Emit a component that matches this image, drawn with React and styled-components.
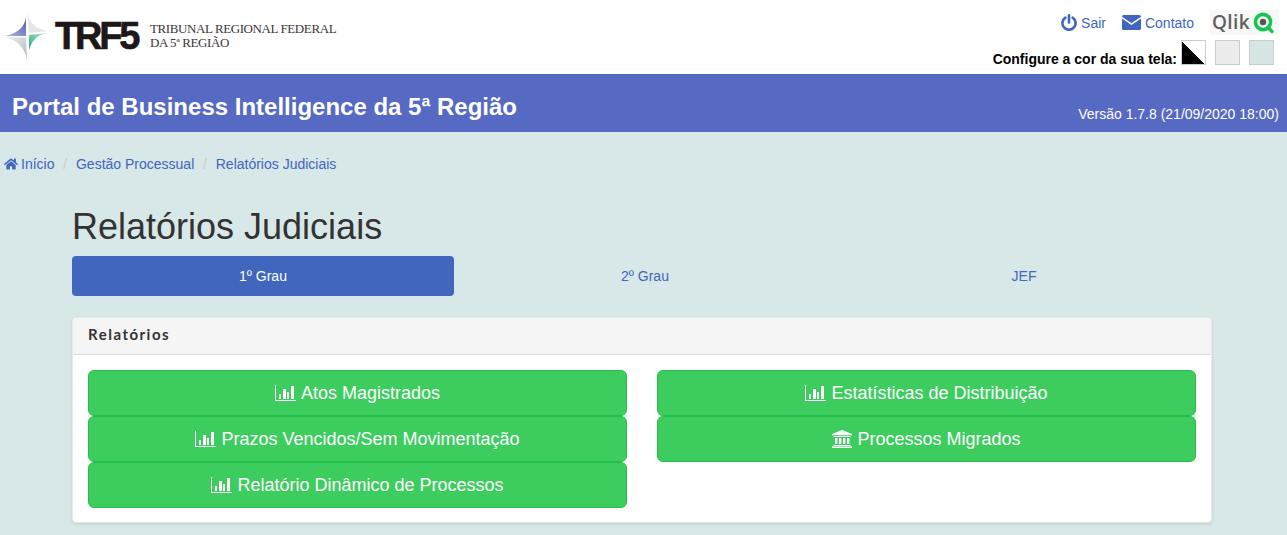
import React from "react";
import styled, { createGlobalStyle } from "styled-components";
import { FaHome } from "react-icons/fa";

const GlobalStyle = createGlobalStyle`
  html, body {
    margin: 0;
    height: 100%;
    overflow: hidden;
    background: #d8e7e7;
    font-family: "Liberation Sans", Arial, sans-serif;
    font-size: 14px;
    color: #333;
  }
  * { box-sizing: border-box; }
`;

const Header = styled.header`
  height: 74px;
  background: #fff;
  display: flex;
  justify-content: space-between;
`;
const Logo = styled.div`
  display: flex;
  align-items: flex-start;
  padding: 10px 0 0 5px;
`;
const LogoMark = styled.svg`
  width: 44px;
  height: 50px;
  flex: none;
`;
const LogoName = styled.div`
  font-weight: 700;
  font-size: 38px;
  line-height: 32px;
  letter-spacing: -3.2px;
  color: #1d1718;
  margin: 10px 0 0 6px;
  width: 84px;
  -webkit-text-stroke: 0.6px #1d1718;
`;
const LogoText = styled.div`
  font-family: "Liberation Serif", "Times New Roman", serif;
  font-size: 13px;
  line-height: 14px;
  letter-spacing: -0.4px;
  color: #3c3636;
  margin: 12px 0 0 11px;
  white-space: nowrap;
`;
const Tools = styled.div`
  display: flex;
  flex-direction: column;
  align-items: flex-end;
  padding: 10px 13px 0 0;
`;
const ToolLinks = styled.div`
  display: flex;
  align-items: center;
  height: 25px;
  margin-right: -5px;
`;
const ToolLink = styled.a`
  display: flex;
  align-items: center;
  gap: ${(p) => p.$gap}px;
  color: #4166bd;
  margin-right: ${(p) => p.$after}px;
`;
const QlikBox = styled.div`
  width: 69px;
  height: 25px;
  background: #f8f8f8;
  display: flex;
  align-items: center;
  padding-left: 2px;
  gap: 3px;
`;
const QlikWord = styled.span`
  font-family: "Open Sans", sans-serif;
  font-weight: 600;
  font-size: 19px;
  line-height: 25px;
  color: #5f5f5f;
  letter-spacing: 0.4px;
`;
const ColorRow = styled.div`
  display: flex;
  align-items: flex-start;
  margin-top: 5px;
`;
const ColorLabel = styled.span`
  font-weight: 700;
  color: #000;
  line-height: 16px;
  margin: 11px 4px 0 0;
`;
const Swatch = styled.div`
  width: 25px;
  height: 25px;
  border: 1px solid #ccc;
  margin-left: ${(p) => p.$left}px;
  background: ${(p) => p.$bg};
`;
const Banner = styled.div`
  height: 58px;
  background: #5669c3;
  color: #fff;
  display: flex;
  justify-content: space-between;
  border-top: 1px solid #4166bd;
`;
const BannerTitle = styled.h1`
  margin: 0;
  padding: 18px 0 0 12px;
  font-size: 24px;
  line-height: 28px;
  font-weight: 700;
`;
const Version = styled.div`
  padding: 29px 8px 0 0;
  line-height: 20px;
`;
const Crumbs = styled.nav`
  display: flex;
  align-items: center;
  height: 20px;
  margin-top: 22px;
  padding-left: 4px;
  color: #4166bd;
`;
const Crumb = styled.a`
  display: flex;
  align-items: center;
  gap: 3px;
  color: #4166bd;
`;
const Sep = styled.span`
  color: #ccc;
  padding: 0 8.8px;
`;
const Main = styled.main`
  width: 1140px;
  margin-left: 72px;
`;
const PageTitle = styled.h2`
  margin: 0;
  padding-top: 33px;
  font-size: 36px;
  line-height: 40px;
  font-weight: 400;
  color: #333;
`;
const Tabs = styled.div`
  display: grid;
  grid-template-columns: 382px 382px 376px;
  margin-top: 9px;
`;
const Tab = styled.a`
  height: 40px;
  display: flex;
  align-items: center;
  justify-content: center;
  border-radius: 4px;
  color: ${(p) => (p.$active ? "#fff" : "#4166bd")};
  background: ${(p) => (p.$active ? "#4166bd" : "transparent")};
`;
const Panel = styled.section`
  margin-top: 21px;
  height: 206px;
  background: #fff;
  border-radius: 4px;
  border: 1px solid #e4e9e9;
  box-shadow: 0 1px 3px rgba(0, 0, 0, 0.12);
  overflow: hidden;
`;
const PanelHeading = styled.div`
  height: 37px;
  padding: 0 15px 5px;
  display: flex;
  align-items: center;
  background: #f5f5f5;
  border-bottom: 1px solid #ddd;
  font-family: Lato, sans-serif;
  font-size: 15px;
  font-weight: 700;
  letter-spacing: 1.5px;
  color: #333;
`;
const PanelBody = styled.div`
  display: grid;
  grid-template-columns: 539px 539px;
  column-gap: 30px;
  padding: 15px 15px 0;
`;
const Column = styled.div`
  display: flex;
  flex-direction: column;
`;
const ReportButton = styled.a`
  height: 46px;
  display: flex;
  align-items: center;
  justify-content: center;
  gap: 5px;
  background: #3ccd5e;
  border: 1px solid #23bf4a;
  border-radius: 6px;
  color: #fff;
  font-size: 18px;
`;

const BarIcon = () => (
  <svg width="21" height="16" viewBox="0 0 21 16" fill="#fff">
    <path d="M0 0h1v15h20v1H0z" />
    <path d="M4 9h2v5H4zM8 4h3v10H8zM12 7h2v7h-2zM16 1h3v13h-3z" />
  </svg>
);

const BankIcon = () => (
  <svg width="20" height="18" viewBox="0 0 20 18" fill="#fff">
    <path d="M10 0l10 4v1.2H0V4z" />
    <path d="M1.5 6h17v1h-17zM3 8h2.4v6H3zM7 8h2.4v6H7zM11 8h2.4v6H11zM15 8h2.4v6H15zM1.5 15h17v1h-17zM0 16.6h20V18H0z" />
  </svg>
);

const PowerIcon = () => (
  <svg width="16" height="17" viewBox="0 0 16 17" fill="none" stroke="#4166bd" strokeWidth="2.6" strokeLinecap="round">
    <path d="M8 1.4v7" />
    <path d="M4.4 3.6a6.6 6.6 0 1 0 7.2 0" />
  </svg>
);

const MailIcon = () => (
  <svg width="19" height="15" viewBox="0 0 19 15">
    <rect width="19" height="15" rx="1.6" fill="#4166bd" />
    <path d="M0 2.6l9.5 6.6 9.5-6.6" fill="none" stroke="#fff" strokeWidth="1.5" />
  </svg>
);

const QlikMark = () => (
  <svg width="21" height="22" viewBox="0 0 21 22" fill="none">
    <circle cx="10" cy="10" r="7.6" stroke="#16c653" strokeWidth="3.6" />
    <circle cx="10" cy="10" r="3.2" fill="#555" />
    <path d="M15 15.5l4 4" stroke="#16c653" strokeWidth="3.4" strokeLinecap="round" />
  </svg>
);

const TrfMark = () => (
  <LogoMark viewBox="0 0 44 50">
    <defs>
      <linearGradient id="markBlue" x1="1" y1="0" x2="0" y2="1">
        <stop offset="0" stopColor="#4d58b4" />
        <stop offset="1" stopColor="#b4b9de" />
      </linearGradient>
      <linearGradient id="markGreen" x1="0" y1="1" x2="1" y2="0">
        <stop offset="0" stopColor="#1fae76" />
        <stop offset="1" stopColor="#bfe8d8" />
      </linearGradient>
      <linearGradient id="markGrey" x1="0" y1="0" x2="1" y2="1">
        <stop offset="0" stopColor="#f0f0f1" />
        <stop offset="1" stopColor="#b5b7bb" />
      </linearGradient>
    </defs>
    <path d="M22 0 C23 12 30 19 43 21 L24 23 Z" fill="#e6e6e8" />
    <path d="M21 7 C20 16 14 23 0 26 L21 26 Z" fill="url(#markBlue)" />
    <path d="M0 27 L21 27.5 L22 50 C20 38 13 31 0 27 Z" fill="url(#markGrey)" />
    <path d="M24 25 L43 23 C33 25 28 28 24 40 Z" fill="url(#markGreen)" />
  </LogoMark>
);

const App = () => {
  return (
    <>
      <GlobalStyle />
      <Header>
        <Logo>
          <TrfMark />
          <LogoName>TRF5</LogoName>
          <LogoText>
            TRIBUNAL REGIONAL FEDERAL
            <br />
            DA 5ª REGIÃO
          </LogoText>
        </Logo>
        <Tools>
          <ToolLinks>
            <ToolLink $gap={4} $after={16}>
              <PowerIcon />
              Sair
            </ToolLink>
            <ToolLink $gap={4} $after={16}>
              <MailIcon />
              Contato
            </ToolLink>
            <QlikBox>
              <QlikWord>Qlik</QlikWord>
              <QlikMark />
            </QlikBox>
          </ToolLinks>
          <ColorRow>
            <ColorLabel>Configure a cor da sua tela:</ColorLabel>
            <Swatch $left={0} $bg="linear-gradient(to top right, #000 50%, #fff 50%)" />
            <Swatch $left={9} $bg="#ececec" />
            <Swatch $left={9} $bg="#d6e6e6" />
          </ColorRow>
        </Tools>
      </Header>
      <Banner>
        <BannerTitle>Portal de Business Intelligence da 5ª Região</BannerTitle>
        <Version>Versão 1.7.8 (21/09/2020 18:00)</Version>
      </Banner>
      <Crumbs>
        <Crumb>
          <FaHome size={14} />
          Início
        </Crumb>
        <Sep>/</Sep>
        <Crumb>Gestão Processual</Crumb>
        <Sep>/</Sep>
        <Crumb>Relatórios Judiciais</Crumb>
      </Crumbs>
      <Main>
        <PageTitle>Relatórios Judiciais</PageTitle>
        <Tabs>
          <Tab $active>1º Grau</Tab>
          <Tab>2º Grau</Tab>
          <Tab>JEF</Tab>
        </Tabs>
        <Panel>
          <PanelHeading>Relatórios</PanelHeading>
          <PanelBody>
            <Column>
              <ReportButton>
                <BarIcon />
                Atos Magistrados
              </ReportButton>
              <ReportButton>
                <BarIcon />
                Prazos Vencidos/Sem Movimentação
              </ReportButton>
              <ReportButton>
                <BarIcon />
                Relatório Dinâmico de Processos
              </ReportButton>
            </Column>
            <Column>
              <ReportButton>
                <BarIcon />
                Estatísticas de Distribuição
              </ReportButton>
              <ReportButton>
                <BankIcon />
                Processos Migrados
              </ReportButton>
            </Column>
          </PanelBody>
        </Panel>
      </Main>
    </>
  );
};

export default App;
